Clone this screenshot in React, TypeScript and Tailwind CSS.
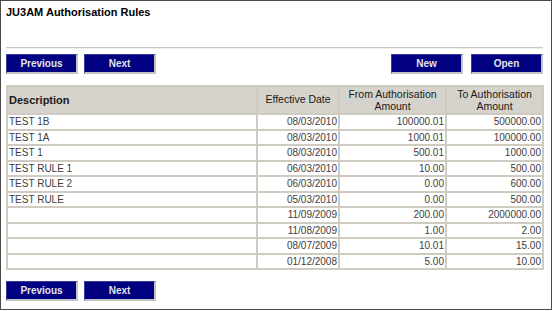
import React from "react";

type Rule = { desc: string; date: string; from: string; to: string; purple?: string[] };

const rules: Rule[] = [
  { desc: "TEST 1B", date: "08/03/2010", from: "100000.01", to: "500000.00", purple: ["from"] },
  { desc: "TEST 1A", date: "08/03/2010", from: "1000.01", to: "100000.00" },
  { desc: "TEST 1", date: "08/03/2010", from: "500.01", to: "1000.00" },
  { desc: "TEST RULE 1", date: "06/03/2010", from: "10.00", to: "500.00", purple: ["from"] },
  { desc: "TEST RULE 2", date: "06/03/2010", from: "0.00", to: "600.00" },
  { desc: "TEST RULE", date: "05/03/2010", from: "0.00", to: "500.00" },
  { desc: "", date: "11/09/2009", from: "200.00", to: "2000000.00", purple: ["date"] },
  { desc: "", date: "11/08/2009", from: "1.00", to: "2.00", purple: ["date"] },
  { desc: "", date: "08/07/2009", from: "10.01", to: "15.00" },
  { desc: "", date: "01/12/2008", from: "5.00", to: "10.00" },
];

function NavButton({ label }: { label: string }) {
  return (
    <button className="w-[72px] h-[20px] bg-[#000080] text-[#e4e4ea] text-[10px] font-bold leading-none border-t border-l border-t-[#3a3a9a] border-l-[#3a3a9a] border-r-2 border-b-2 border-r-[#c4c4c4] border-b-[#c4c4c4]">
      {label}
    </button>
  );
}

export default function App() {
  const cell = "bg-white h-[13.5px] text-[10px] leading-[13.5px] px-[1px] text-[#404040] whitespace-nowrap overflow-hidden";
  const tone = (r: Rule, k: string) => (r.purple?.includes(k) ? "text-[#5e2f62]" : "");

  return (
    <div className="w-[554px] h-[311px] bg-white" style={{ fontFamily: '"Liberation Sans", Arial, sans-serif' }}>
      <div className="w-[552px] h-[310px] border border-[#4a4a4a] pl-[5px] pr-[7px]">
        {/* Title */}
        <div className="h-[46px] pt-[5px]">
          <h1 className="text-[11px] leading-[13px] font-bold text-black">JU3AM Authorisation Rules</h1>
        </div>
        <div className="border-t border-t-[#cbc8c0] border-b border-b-[#f0f0ee] mr-[1px]" />

        {/* Top buttons */}
        <div className="flex justify-between mt-[5px] pr-[1px]">
          <div className="flex gap-[6px]">
            <NavButton label="Previous" />
            <NavButton label="Next" />
          </div>
          <div className="flex gap-[8px]">
            <NavButton label="New" />
            <NavButton label="Open" />
          </div>
        </div>

        {/* Table */}
        <div className="mt-[11px] grid grid-cols-[248px_80px_105px_95px] gap-[2px] p-[2px] bg-[#cfcbc0]">
          <div className="bg-[#d6d3cd] h-[26px] flex items-center px-[1px] text-[11px] font-bold text-[#1a1a1a]">Description</div>
          <div className="bg-[#d6d3cd] h-[26px] flex items-center justify-center text-[10.5px] text-[#1a1a1a]">Effective Date</div>
          <div className="bg-[#d6d3cd] h-[26px] flex items-center justify-center text-center text-[10.5px] leading-[12px] text-[#1a1a1a]">
            From Authorisation
            <br />
            Amount
          </div>
          <div className="bg-[#d6d3cd] h-[26px] flex items-center justify-center text-center text-[10.5px] leading-[12px] text-[#1a1a1a]">
            To Authorisation
            <br />
            Amount
          </div>
          {rules.map((r, i) => (
            <React.Fragment key={i}>
              <div className={`${cell} ${tone(r, "desc")}`}>{r.desc}</div>
              <div className={`${cell} text-right ${tone(r, "date")}`}>{r.date}</div>
              <div className={`${cell} text-right ${tone(r, "from")}`}>{r.from}</div>
              <div className={`${cell} text-right ${tone(r, "to")}`}>{r.to}</div>
            </React.Fragment>
          ))}
        </div>

        {/* Bottom buttons */}
        <div className="flex gap-[6px] mt-[11px]">
          <NavButton label="Previous" />
          <NavButton label="Next" />
        </div>
      </div>
    </div>
  );
}
